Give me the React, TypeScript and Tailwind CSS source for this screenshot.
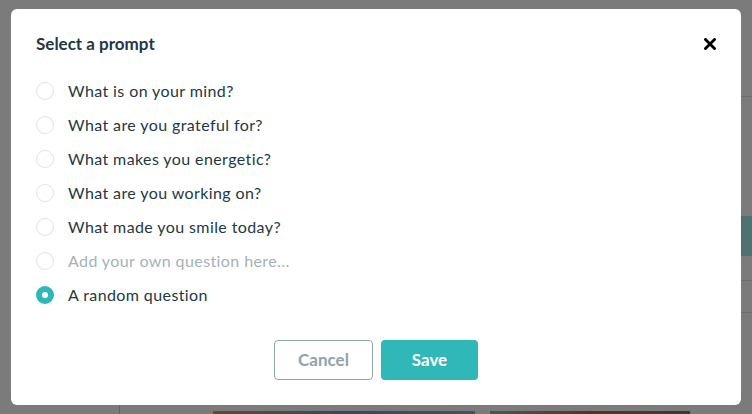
import React from "react";

const options = [
  { label: "What is on your mind?" },
  { label: "What are you grateful for?" },
  { label: "What makes you energetic?" },
  { label: "What are you working on?" },
  { label: "What made you smile today?" },
  { label: "Add your own question here...", placeholder: true },
  { label: "A random question", selected: true },
];

export default function App() {
  return (
    <div
      className="relative w-[752px] h-[414px] overflow-hidden bg-[#7b7b7b]"
      style={{ fontFamily: "Lato, 'Noto Sans', sans-serif" }}
    >
      {/* dimmed page behind */}
      <div className="absolute left-[741px] top-[96px] w-[11px] h-px bg-[#6e6e6e]" />
      <div className="absolute left-[741px] top-[216px] w-[11px] h-[40px] bg-[#4d7270]" />
      <div className="absolute left-[741px] top-[280px] w-[11px] h-px bg-[#6e6e6e]" />
      <div className="absolute left-[741px] top-[312px] w-[11px] h-px bg-[#6e6e6e]" />
      <div className="absolute left-[119px] top-[405px] w-px h-[9px] bg-[#666]" />
      <div className="absolute left-[213px] top-[411px] w-[262px] h-[3px] bg-gradient-to-r from-[#5d4a3a] via-[#3c4658] to-[#4a5060]" />
      <div className="absolute left-[490px] top-[411px] w-[200px] h-[3px] bg-gradient-to-r from-[#4a5558] via-[#5a3020] to-[#3a3a3a]" />

      {/* modal */}
      <div className="absolute left-[11px] top-[9px] w-[730px] h-[396px] bg-white rounded-[6px] px-[25px] pt-[25px] pb-[25px] flex flex-col">
        <div className="flex items-center justify-between h-[20px]">
          <h2 className="text-[17px] font-bold text-[#1e3942] leading-[20px]">Select a prompt</h2>
          <button className="mr-[-1px] w-[14px] h-[14px] flex items-center justify-center">
            <svg width="12" height="12" viewBox="0 0 12 12">
              <path d="M1.5 1.5 L10.5 10.5 M10.5 1.5 L1.5 10.5" stroke="#000" strokeWidth="2.8" strokeLinecap="square" />
            </svg>
          </button>
        </div>

        <div className="mt-[20px] flex flex-col">
          {options.map((o) => (
            <label key={o.label} className="h-[34px] flex items-center gap-[14px]">
              {o.selected ? (
                <span className="w-[18px] h-[18px] rounded-full bg-[#2fb8b7] flex items-center justify-center">
                  <span className="w-[6px] h-[6px] rounded-full bg-white" />
                </span>
              ) : (
                <span className="w-[18px] h-[18px] rounded-full border border-[#dfe5e7] bg-white" />
              )}
              <span
                className={
                  "text-[16px] leading-[20px] tracking-[0.4px] " +
                  (o.placeholder ? "text-[#a3b3b8]" : "text-[#1e3942]")
                }
              >
                {o.label}
              </span>
            </label>
          ))}
        </div>

        <div className="mt-auto flex justify-center gap-[8px]">
          <button className="w-[99px] h-[40px] rounded-[4px] border border-[#90a4ab] text-[#8fa3aa] text-[17px] font-bold">
            Cancel
          </button>
          <button className="w-[97px] h-[40px] rounded-[4px] bg-[#30b8b8] text-white text-[17px] font-bold">
            Save
          </button>
        </div>
      </div>
    </div>
  );
}
